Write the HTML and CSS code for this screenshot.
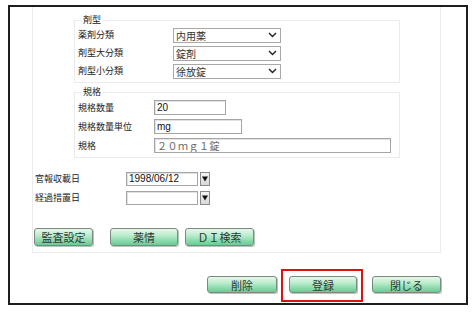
FILE: index.html
```html
<!DOCTYPE html>
<html lang="ja">
<head>
<meta charset="utf-8">
<link rel="stylesheet" href="styles.css">
</head>
<body>
<div class="frame">
  <div class="panel">
    <fieldset class="group g1">
      <legend>剤型</legend>
      <div class="row r18"><span class="lbl w95">薬剤分類</span><div class="sel">内用薬<svg class="chev" width="9" height="6" viewBox="0 0 9 6"><path d="M1 1 L4.5 4.5 L8 1" fill="none" stroke="#222" stroke-width="1.4"/></svg></div></div>
      <div class="row r18"><span class="lbl w95">剤型大分類</span><div class="sel">錠剤<svg class="chev" width="9" height="6" viewBox="0 0 9 6"><path d="M1 1 L4.5 4.5 L8 1" fill="none" stroke="#222" stroke-width="1.4"/></svg></div></div>
      <div class="row r18"><span class="lbl w95">剤型小分類</span><div class="sel">徐放錠<svg class="chev" width="9" height="6" viewBox="0 0 9 6"><path d="M1 1 L4.5 4.5 L8 1" fill="none" stroke="#222" stroke-width="1.4"/></svg></div></div>
    </fieldset>
    <fieldset class="group g2">
      <legend>規格</legend>
      <div class="row r19"><span class="lbl w76">規格数量</span><input class="txt i1" value="20"></div>
      <div class="row r19"><span class="lbl w76">規格数量単位</span><input class="txt i2" value="mg"></div>
      <div class="row r19"><span class="lbl w76">規格</span><input class="txt i3 ro" value="２０ｍｇ１錠"></div>
    </fieldset>
    <div class="dates">
      <div class="row r19"><span class="lbl w91">官報収載日</span><input class="txt dt" value="1998/06/12"><span class="dd"><svg width="6" height="6" viewBox="0 0 6 6"><path d="M0 0.5 H6 L3 5.5 Z" fill="#111"/></svg></span></div>
      <div class="row r19"><span class="lbl w91">経過措置日</span><input class="txt dt" value=""><span class="dd"><svg width="6" height="6" viewBox="0 0 6 6"><path d="M0 0.5 H6 L3 5.5 Z" fill="#111"/></svg></span></div>
    </div>
    <div class="btnrow">
      <button class="gbtn b1">監査設定</button>
      <button class="gbtn b2">薬情</button>
      <button class="gbtn b3">ＤＩ検索</button>
    </div>
  </div>
  <div class="actions">
    <button class="gbtn a1">削除</button>
    <div class="hl"><button class="gbtn a2">登録</button></div>
    <button class="gbtn a3">閉じる</button>
  </div>
</div>
</body>
</html>
```
FILE: styles.css
```css
html, body {
  margin: 0;
  padding: 0;
  background: #fff;
}
body {
  font-family: "Noto Sans CJK JP", "Liberation Sans", sans-serif;
  color: #222;
}
.frame {
  margin: 5px 0 0 8px;
  width: 456px;
  height: 296px;
  border: 2px solid #1e1e1e;
}
.panel {
  margin-left: 22px;
  width: 407px;
  border: 1px solid #ececec;
  border-top: none;
  padding: 7px 0 6px 0;
}
.group {
  margin: 0 0 0 41px;
  width: 326px;
  box-sizing: border-box;
  border: 1px solid #ebebeb;
  padding: 0 0 2px 3px;
}
.group legend {
  font-size: 9px;
  line-height: 12px;
  margin-left: 3px;
  padding: 0 2px;
  color: #222;
}
.g2 {
  margin-top: 3px;
}
.row {
  display: flex;
  align-items: center;
}
.r18 { height: 18px; }
.r19 { height: 19px; }
.lbl {
  font-size: 9px;
  line-height: 12px;
  color: #222;
  flex: none;
}
.w95 { width: 95px; }
.w76 { width: 76px; }
.w91 { width: 91px; }
.sel {
  box-sizing: border-box;
  width: 108px;
  height: 15px;
  border: 1px solid #a8a8a8;
  font-size: 10px;
  line-height: 13px;
  padding-left: 2px;
  color: #333;
  display: flex;
  align-items: center;
  justify-content: space-between;
}
.chev {
  margin-right: 3px;
}
.txt {
  box-sizing: border-box;
  height: 15px;
  margin: 0;
  border: 1px solid #a5a5a5;
  box-shadow: inset 1px 1px 0 #e2e2e2;
  padding: 0 2px;
  font-family: "Liberation Sans", "Noto Sans CJK JP", sans-serif;
  font-size: 10px;
  color: #111;
  outline: none;
}
.i1 { width: 72px; }
.i2 { width: 88px; }
.i3 {
  width: 237px;
  font-family: "Noto Sans CJK JP", sans-serif;
  color: #666;
  letter-spacing: 0.5px;
}
.dates {
  margin: 11px 0 0 2px;
}
.dt {
  width: 72px;
  height: 14px;
}
.dd {
  box-sizing: border-box;
  margin-left: 2px;
  width: 10px;
  height: 14px;
  border: 1px solid #8a8a8a;
  background: linear-gradient(#f4f4f4, #d8d8d8);
  display: flex;
  align-items: center;
  justify-content: center;
}
.btnrow {
  display: flex;
  margin: 21px 0 0 1px;
}
.gbtn {
  box-sizing: border-box;
  height: 18px;
  margin: 0;
  padding: 0;
  border: 1px solid #7a8a80;
  border-radius: 3px;
  background: linear-gradient(#e6f8ec 0%, #bdebcd 40%, #8fdcae 70%, #6ccb93 100%);
  box-shadow: 1px 1px 0 #b8c4bc;
  font-family: "Noto Sans CJK JP", sans-serif;
  font-size: 11px;
  line-height: 16px;
  color: #2c3a33;
  text-align: center;
}
.b1 { width: 59px; }
.b2 { width: 68px; margin-left: 17px; }
.b3 { width: 69px; margin-left: 7px; }
.actions {
  display: flex;
  justify-content: flex-end;
  align-items: flex-start;
  margin: 16px 25px 0 0;
}
.a1 { width: 70px; height: 17px; margin-top: 7px; margin-right: 4px; }
.hl {
  box-sizing: border-box;
  display: flex;
  align-items: flex-start;
  width: 82px;
  height: 33px;
  border: 2px solid #e01010;
  padding: 5px 0 0 6px;
}
.a2 { width: 68px; height: 17px; }
.a3 { width: 69px; height: 17px; margin-top: 7px; margin-left: 9px; }
```
